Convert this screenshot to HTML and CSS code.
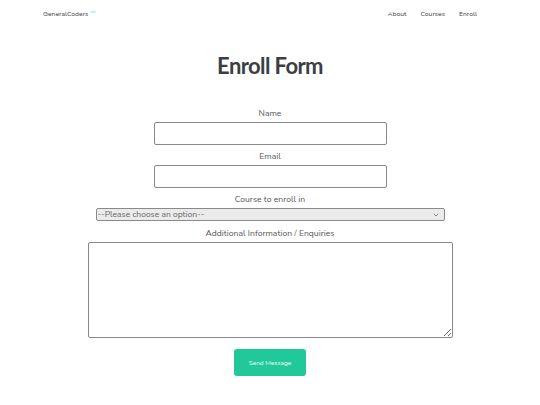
FILE: index.html
```html
<!DOCTYPE html>
<html lang="en">
<head>
<meta charset="utf-8">
<title>Enroll Form</title>
<link rel="stylesheet" href="styles.css">
</head>
<body>
<header class="topbar">
  <a class="brand" href="#">GeneralCoders<sup class="brand-tag">&lt;/&gt;</sup></a>
  <nav class="nav">
    <a href="#">About</a>
    <a href="#">Courses</a>
    <a href="#">Enroll</a>
  </nav>
</header>
<main class="page">
  <h1 class="title">Enroll Form</h1>
  <form class="form">
    <label class="label" for="name">Name</label>
    <input class="field field-short" id="name" type="text">
    <label class="label" for="email">Email</label>
    <input class="field field-short" id="email" type="email">
    <label class="label" for="course">Course to enroll in</label>
    <div class="select-wrap">
      <select class="select" id="course">
        <option>--Please choose an option--</option>
      </select>
      <svg class="chev" width="6" height="4" viewBox="0 0 6 4"><path d="M0.8 0.8 L3 3 L5.2 0.8" fill="none" stroke="#777" stroke-width="0.9"/></svg>
    </div>
    <label class="label" for="info">Additional Information / Enquiries</label>
    <textarea class="textarea" id="info"></textarea>
    <button class="btn" type="button">Send Message</button>
  </form>
</main>
</body>
</html>
```
FILE: styles.css
```css
* { box-sizing: border-box; }
body {
  margin: 0;
  font-family: "Nunito", "Lato", "Open Sans", sans-serif;
  background: #fff;
  color: #555;
}
.topbar {
  height: 27px;
  display: flex;
  align-items: center;
  justify-content: space-between;
  padding: 0 63px 0 43px;
}
.brand {
  font-size: 6.8px;
  color: #444;
  text-decoration: none;
}
.brand-tag {
  font-size: 4.5px;
  color: #3fd0a5;
  margin-left: 1.5px;
}
.nav {
  display: flex;
  gap: 14px;
}
.nav a {
  font-size: 6.8px;
  color: #444;
  text-decoration: none;
}
.page {
  display: flex;
  flex-direction: column;
  align-items: center;
}
.title {
  margin: 26px 0 28px;
  font-family: "Lato", "Open Sans", sans-serif;
  font-size: 22px;
  line-height: 26px;
  font-weight: 700;
  letter-spacing: -0.6px;
  color: #3a3f46;
}
.form {
  display: flex;
  flex-direction: column;
  align-items: center;
}
.label {
  display: block;
  font-size: 8.6px;
  line-height: 12px;
  margin-bottom: 3px;
  color: #555;
}
.field {
  display: block;
  height: 23px;
  border: 1px solid #888;
  border-radius: 2px;
  margin: 0 0 5px;
  padding: 0 4px;
}
.field-short { width: 233px; }
.select-wrap {
  position: relative;
  width: 349px;
  margin: 0 0 6px;
}
.select {
  display: block;
  width: 100%;
  height: 13px;
  font-size: 8.5px;
  line-height: 11px;
  padding: 0 0 0 1px;
  margin: 0;
  color: #666;
  background: #ebebeb;
  border: 1px solid #8a8a8a;
  border-radius: 2px;
  font-family: inherit;
  appearance: none;
  -webkit-appearance: none;
}
.chev {
  position: absolute;
  right: 6px;
  top: 5px;
  pointer-events: none;
}
.textarea {
  display: block;
  width: 365px;
  height: 96px;
  margin: 0;
  border: 1px solid #888;
  border-radius: 2px;
}
.btn {
  margin-top: 11px;
  width: 72px;
  height: 27px;
  border: none;
  border-radius: 3px;
  background: #20c997;
  color: #e8fff6;
  font-size: 6.5px;
  font-family: inherit;
}
```
